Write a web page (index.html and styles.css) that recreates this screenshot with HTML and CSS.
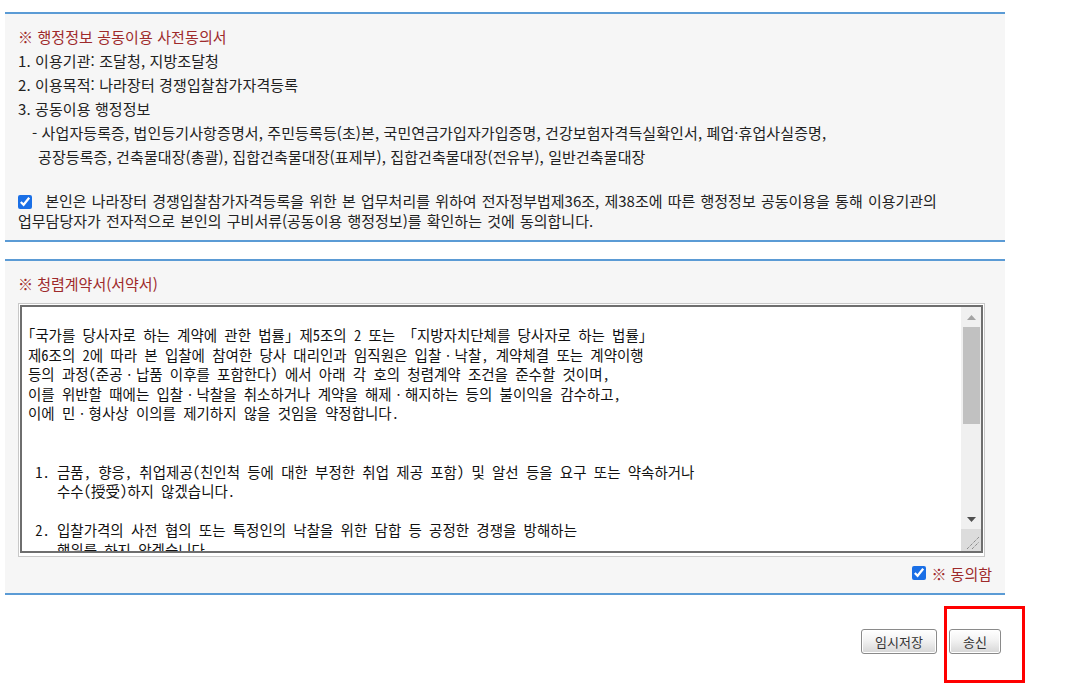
FILE: index.html
```html
<!DOCTYPE html>
<html lang="ko">
<head>
<meta charset="utf-8">
<title>행정정보 공동이용 사전동의서</title>
<link rel="stylesheet" href="styles.css">
</head>
<body>
<div class="page">
  <section class="panel p1">
    <p class="title">※ 행정정보 공동이용 사전동의서</p>
    <p class="line">1. 이용기관: 조달청, 지방조달청</p>
    <p class="line">2. 이용목적: 나라장터 경쟁입찰참가자격등록</p>
    <p class="line">3. 공동이용 행정정보</p>
    <p class="line sub">- 사업자등록증, 법인등기사항증명서, 주민등록등(초)본, 국민연금가입자가입증명, 건강보험자격득실확인서, 폐업·휴업사실증명,</p>
    <p class="line sub2">공장등록증, 건축물대장(총괄), 집합건축물대장(표제부), 집합건축물대장(전유부), 일반건축물대장</p>
    <p class="consent"><input type="checkbox" class="chk" checked> 본인은 나라장터 경쟁입찰참가자격등록을 위한 본 업무처리를 위하여 전자정부법제36조, 제38조에 따른 행정정보 공동이용을 통해 이용기관의<br>업무담당자가 전자적으로 본인의 구비서류(공동이용 행정정보)를 확인하는 것에 동의합니다.</p>
  </section>

  <section class="panel p2">
    <p class="title">※ 청렴계약서(서약서)</p>
    <div class="ta-outer">
      <div class="ta">
        <div class="ta-text">
<div class="tl">｢국가를 당사자로 하는 계약에 관한 법률｣ 제5조의 2 또는  ｢지방자치단체를 당사자로 하는 법률｣</div>
<div class="tl">제6조의 2에 따라 본 입찰에 참여한 당사 대리인과 임직원은 입찰ㆍ낙찰, 계약체결 또는 계약이행</div>
<div class="tl">등의 과정(준공ㆍ납품 이후를 포함한다) 에서 아래 각 호의 청렴계약 조건을 준수할 것이며,</div>
<div class="tl">이를 위반할 때에는 입찰ㆍ낙찰을 취소하거나 계약을 해제ㆍ해지하는 등의 불이익을 감수하고,</div>
<div class="tl">이에 민ㆍ형사상 이의를 제기하지 않을 것임을 약정합니다.</div>
<div class="tl"> </div>
<div class="tl"> </div>
<div class="tl"> 1. 금품, 향응, 취업제공(친인척 등에 대한 부정한 취업 제공 포함) 및 알선 등을 요구 또는 약속하거나</div>
<div class="tl">    수수(授受)하지 않겠습니다.</div>
<div class="tl"> </div>
<div class="tl"> 2. 입찰가격의 사전 협의 또는 특정인의 낙찰을 위한 담합 등 공정한 경쟁을 방해하는</div>
<div class="tl">    행위를 하지 않겠습니다.</div>
<div class="tl"> </div>
<div class="tl"> 3. 공정한 직무수행을 방해하는 알선ㆍ청탁을 통하여 입찰 또는 계약과 관련된 특정 정보의 제공을</div>
        </div>
        <div class="sb">
          <div class="sb-btn"><svg width="9" height="5" viewBox="0 0 9 5"><path d="M0 5 L4.5 0 L9 5 Z" fill="#a3a3a3"/></svg></div>
          <div class="sb-track"><div class="sb-thumb"></div></div>
          <div class="sb-btn"><svg width="9" height="5" viewBox="0 0 9 5"><path d="M0 0 L9 0 L4.5 5 Z" fill="#505050"/></svg></div>
          <div class="sb-corner"><svg width="20" height="22" viewBox="0 0 20 22"><path d="M6 20 L18 8 M11 20 L18 13" stroke="#6a6a6a" stroke-width="1" stroke-dasharray="1 1"/></svg></div>
        </div>
      </div>
    </div>
    <div class="agree"><input type="checkbox" class="chk" checked><span>※ 동의함</span></div>
  </section>

  <div class="actions">
    <button class="btn w1">임시저장</button>
    <button class="btn w2">송신</button>
  </div>
  <div class="highlight"></div>
</div>
</body>
</html>
```

FILE: styles.css
```css
html, body {
  margin: 0;
  padding: 0;
  background: #ffffff;
}
body {
  font-family: "Noto Sans CJK KR", "Noto Sans", sans-serif;
  color: #222222;
}
.page {
  position: relative;
  width: 1000px;
  height: 672px;
  padding: 12px 0 0 5px;
}
.panel {
  background: #f6f6f6;
  border-top: 2px solid #5b9bd5;
  border-bottom: 2px solid #5b9bd5;
  padding: 11px 13px 9px 13px;
}
.panel p {
  margin: 0;
}
.p1 .title,
.p1 .line {
  font-size: 15px;
  line-height: 24px;
  height: 24px;
  white-space: nowrap;
  letter-spacing: 0.1px;
}
.title {
  color: #9e2a2b;
  font-size: 15px;
  line-height: 24px;
}
.sub {
  padding-left: 14px;
}
.sub2 {
  padding-left: 20px;
}
.consent {
  margin-top: 22px !important;
  font-size: 15px;
  line-height: 20px;
  word-spacing: 1px;
  white-space: nowrap;
}
.chk {
  width: 14px;
  height: 14px;
  margin: 0;
  accent-color: #1a6fe6;
}
.consent .chk {
  vertical-align: -2px;
  margin-right: 8px;
}
.p2 {
  margin-top: 17px;
  padding-bottom: 10px;
}
.p2 .title {
  margin-bottom: 7px;
}
.ta-outer {
  width: 963px;
  height: 250px;
  border: 1px solid #c8c8c8;
  padding: 1px;
  background: #ffffff;
  box-sizing: content-box;
}
.ta {
  display: flex;
  height: 244px;
  border: 2px solid #6e6e6e;
  background: #ffffff;
  overflow: hidden;
}
.ta-text {
  flex: 1;
  padding: 18px 0 0 6px;
  overflow: hidden;
  color: #111111;
  font-family: "Noto Sans Mono CJK KR", "Noto Sans CJK KR", monospace;
  font-size: 14.5px;
}
.tl {
  height: 19.5px;
  line-height: 19.5px;
  white-space: pre;
}
.sb {
  width: 20px;
  display: flex;
  flex-direction: column;
  background: #f0f0f0;
}
.sb-btn {
  height: 20px;
  display: flex;
  align-items: center;
  justify-content: center;
}
.sb-track {
  flex: 1;
}
.sb-thumb {
  height: 97px;
  margin: 0 1px 0 2px;
  background: #c1c1c1;
}
.sb-corner {
  height: 22px;
  background: #dcdcdc;
}
.sb-corner svg {
  display: block;
}
.agree {
  margin-top: 6px;
  height: 20px;
  display: flex;
  justify-content: flex-end;
  align-items: center;
  gap: 5px;
  font-size: 15px;
  color: #9e2a2b;
}
.actions {
  display: flex;
  justify-content: flex-end;
  gap: 12px;
  padding-right: 4px;
  margin-top: 34px;
}
.btn {
  height: 25px;
  padding: 0;
  font-family: "Noto Sans CJK KR", sans-serif;
  font-size: 13px;
  color: #333333;
  border: 1px solid #8a8a8a;
  border-radius: 3px;
  background: linear-gradient(#ffffff 0%, #f2f2f2 45%, #d6d6d6 100%);
  box-shadow: inset 0 0 0 1px #ffffff;
}
.w1 {
  width: 76px;
}
.w2 {
  width: 52px;
}
.highlight {
  position: absolute;
  left: 944px;
  top: 606px;
  width: 81px;
  height: 77px;
  box-sizing: border-box;
  border: 3px solid #ff0000;
}
```
